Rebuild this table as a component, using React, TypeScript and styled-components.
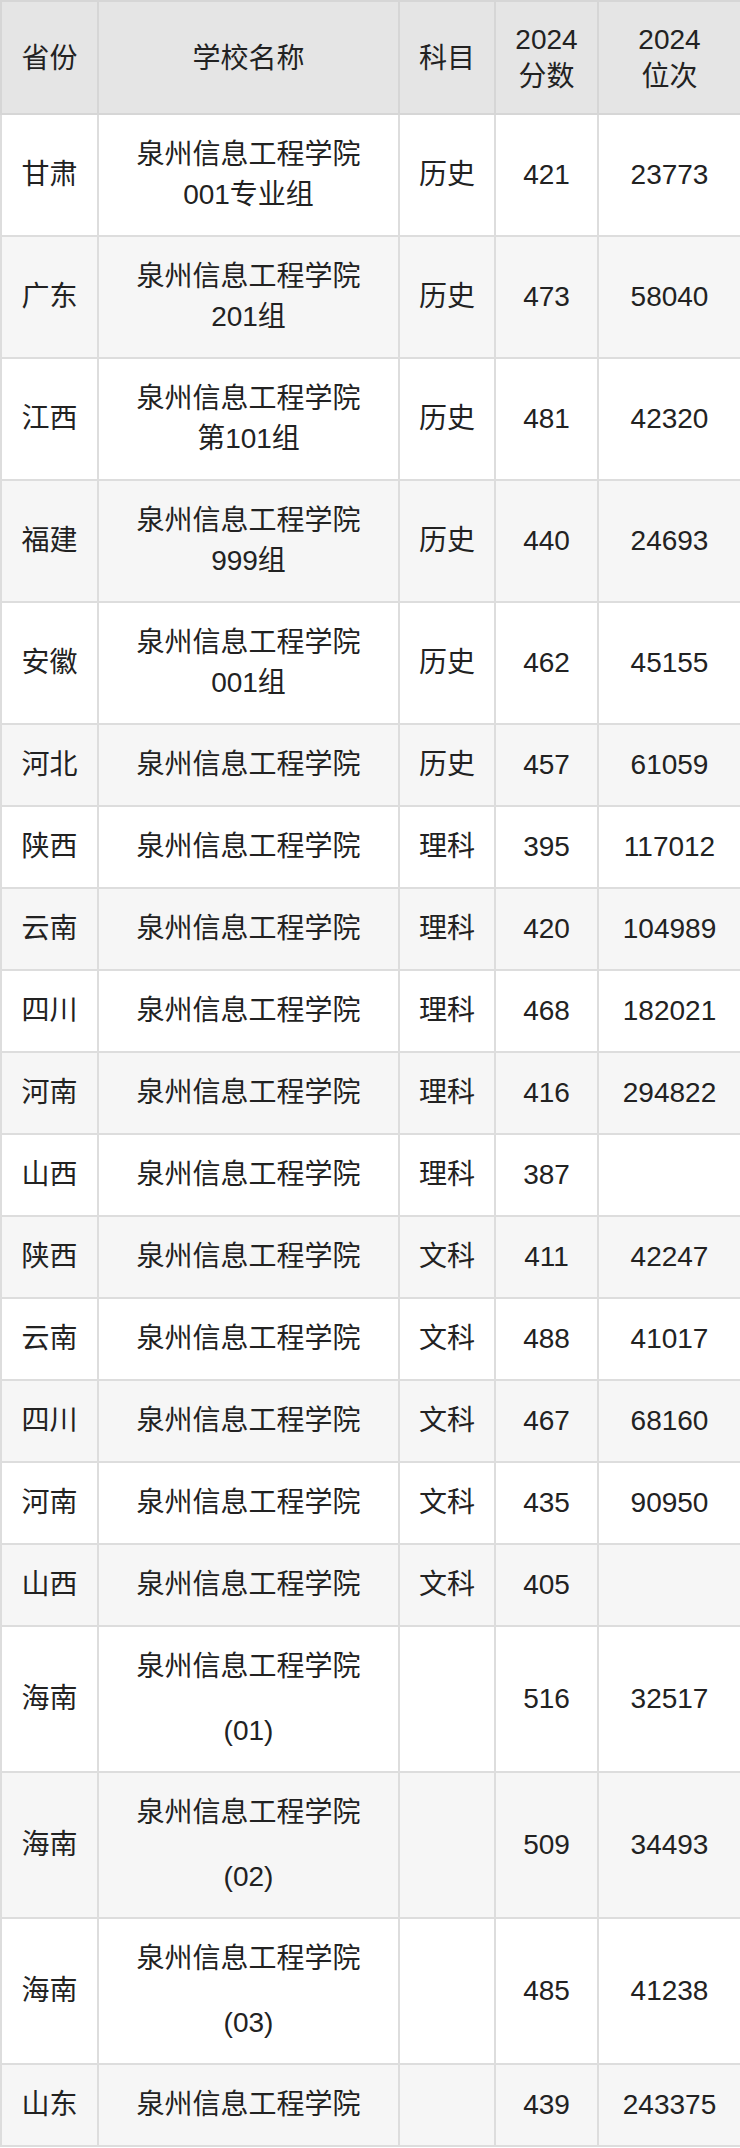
import React from "react";
import styled, { createGlobalStyle } from "styled-components";

const GlobalStyle = createGlobalStyle`
  html, body {
    margin: 0;
    padding: 0;
    background: #ffffff;
  }
  body {
    font-family: "Liberation Sans", "Noto Sans CJK SC", sans-serif;
    color: #222222;
  }
`;

const Table = styled.table`
  width: 740px;
  border-collapse: collapse;
  table-layout: fixed;
  font-family: "Liberation Sans", "Noto Sans CJK SC", sans-serif;
  font-size: 28px;
  color: #222222;
`;

const HeadCell = styled.th`
  background: #e5e5e5;
  border: 2px solid #d6d6d6;
  padding: 19px 8px 18px;
  line-height: 37px;
  font-weight: normal;
  text-align: center;
  vertical-align: middle;
`;

const Row = styled.tr<{ $shaded: boolean }>`
  background: ${(p) => (p.$shaded ? "#f6f6f6" : "#ffffff")};
`;

const Cell = styled.td`
  border: 2px solid #dddddd;
  padding: 20px 8px;
  line-height: 40px;
  text-align: center;
  vertical-align: middle;
`;

const Line = styled.div<{ $gap?: boolean }>`
  margin-top: ${(p) => (p.$gap ? "24px" : "0")};
  white-space: nowrap;
`;

type Item = {
  prov: string;
  name: string[];
  gap?: boolean;
  subj: string;
  score: string;
  rank: string;
};

const SCHOOL = "泉州信息工程学院";

const rows: Item[] = [
  { prov: "甘肃", name: [SCHOOL, "001专业组"], subj: "历史", score: "421", rank: "23773" },
  { prov: "广东", name: [SCHOOL, "201组"], subj: "历史", score: "473", rank: "58040" },
  { prov: "江西", name: [SCHOOL, "第101组"], subj: "历史", score: "481", rank: "42320" },
  { prov: "福建", name: [SCHOOL, "999组"], subj: "历史", score: "440", rank: "24693" },
  { prov: "安徽", name: [SCHOOL, "001组"], subj: "历史", score: "462", rank: "45155" },
  { prov: "河北", name: [SCHOOL], subj: "历史", score: "457", rank: "61059" },
  { prov: "陕西", name: [SCHOOL], subj: "理科", score: "395", rank: "117012" },
  { prov: "云南", name: [SCHOOL], subj: "理科", score: "420", rank: "104989" },
  { prov: "四川", name: [SCHOOL], subj: "理科", score: "468", rank: "182021" },
  { prov: "河南", name: [SCHOOL], subj: "理科", score: "416", rank: "294822" },
  { prov: "山西", name: [SCHOOL], subj: "理科", score: "387", rank: "" },
  { prov: "陕西", name: [SCHOOL], subj: "文科", score: "411", rank: "42247" },
  { prov: "云南", name: [SCHOOL], subj: "文科", score: "488", rank: "41017" },
  { prov: "四川", name: [SCHOOL], subj: "文科", score: "467", rank: "68160" },
  { prov: "河南", name: [SCHOOL], subj: "文科", score: "435", rank: "90950" },
  { prov: "山西", name: [SCHOOL], subj: "文科", score: "405", rank: "" },
  { prov: "海南", name: [SCHOOL, "(01)"], gap: true, subj: "", score: "516", rank: "32517" },
  { prov: "海南", name: [SCHOOL, "(02)"], gap: true, subj: "", score: "509", rank: "34493" },
  { prov: "海南", name: [SCHOOL, "(03)"], gap: true, subj: "", score: "485", rank: "41238" },
  { prov: "山东", name: [SCHOOL], subj: "", score: "439", rank: "243375" },
];

export default function App() {
  return (
    <>
      <GlobalStyle />
      <Table>
        <colgroup>
          <col style={{ width: 97 }} />
          <col style={{ width: 301 }} />
          <col style={{ width: 96 }} />
          <col style={{ width: 103 }} />
          <col style={{ width: 143 }} />
        </colgroup>
        <thead>
          <tr>
            <HeadCell>省份</HeadCell>
            <HeadCell>学校名称</HeadCell>
            <HeadCell>科目</HeadCell>
            <HeadCell>
              <Line>2024</Line>
              <Line>分数</Line>
            </HeadCell>
            <HeadCell>
              <Line>2024</Line>
              <Line>位次</Line>
            </HeadCell>
          </tr>
        </thead>
        <tbody>
          {rows.map((r, i) => (
            <Row key={i} $shaded={i % 2 === 1}>
              <Cell>{r.prov}</Cell>
              <Cell>
                {r.name.map((n, j) => (
                  <Line key={j} $gap={r.gap && j > 0}>
                    {n}
                  </Line>
                ))}
              </Cell>
              <Cell>{r.subj}</Cell>
              <Cell>{r.score}</Cell>
              <Cell>{r.rank}</Cell>
            </Row>
          ))}
        </tbody>
      </Table>
    </>
  );
}
